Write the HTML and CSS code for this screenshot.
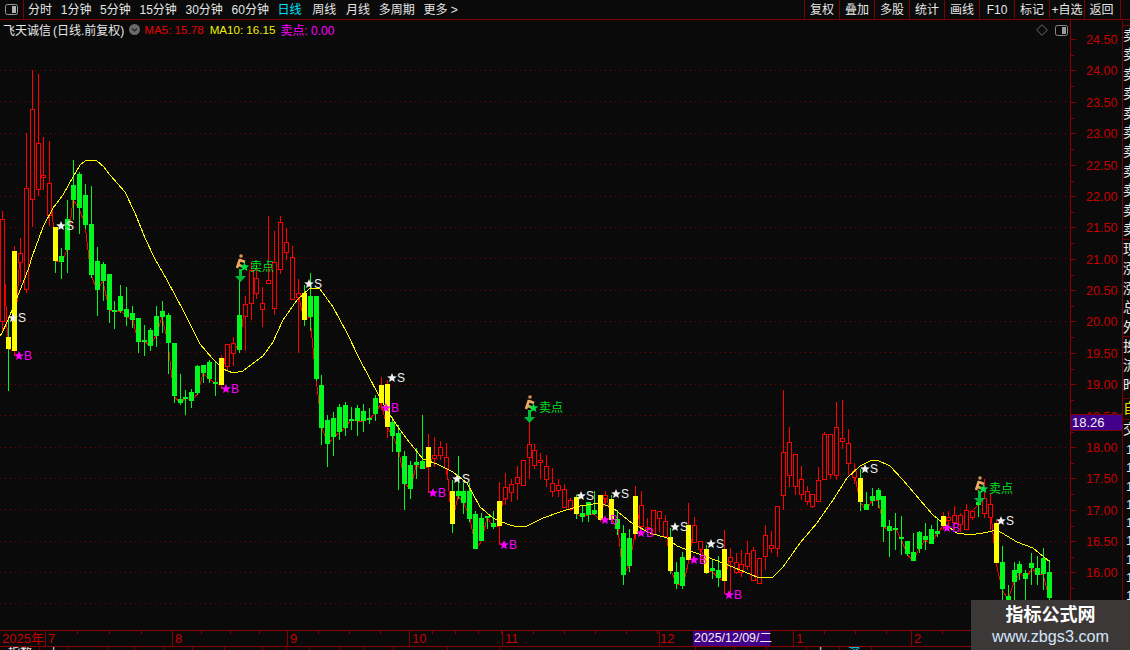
FILE: index.html
```html
<!DOCTYPE html>
<html lang="zh">
<head>
<meta charset="utf-8">
<title>飞天诚信 日线</title>
<link rel="stylesheet" href="styles.css">
</head>
<body>
<div class="app">
  <header class="topbar">
    <button class="panel-btn"><svg width="13" height="11" viewBox="0 0 13 11"><rect x="0.5" y="0.5" width="12" height="10" rx="2" fill="none" stroke="#9a9a9a"/><rect x="7" y="2" width="4" height="7" fill="#b0b0b0"/></svg></button>
    <nav class="tabs">
      <span>分时</span><span>1分钟</span><span>5分钟</span><span>15分钟</span><span>30分钟</span><span>60分钟</span>
      <span class="active">日线</span><span class="week">周线</span><span>月线</span><span>多周期</span><span>更多 &gt;</span>
    </nav>
    <nav class="tools">
      <span>复权</span><span>叠加</span><span>多股</span><span>统计</span><span>画线</span><span>F10</span><span>标记</span><span>+自选</span><span class="last">返回</span>
    </nav>
  </header>
  <div class="main">
    <section class="chart">
      <div class="info">
        <span class="name">飞天诚信</span><span class="name-sub">(日线.前复权)</span>
        <svg class="down" width="11" height="11" viewBox="0 0 11 11"><circle cx="5.5" cy="5.5" r="5.5" fill="#6a6a6a"/><path d="M3 4.5 5.5 7 8 4.5" fill="none" stroke="#222" stroke-width="1.2"/></svg>
        <span class="ma5">MA5: 15.78</span><span class="ma10">MA10: 16.15</span><span class="sell">卖点: 0.00</span>
      </div>
      <div class="corner-icons">
        <svg width="12" height="12" viewBox="0 0 12 12"><path d="M6 .7 11.3 6 6 11.3 .7 6Z" fill="none" stroke="#6a6a6a"/></svg>
        <svg width="13" height="11" viewBox="0 0 13 11"><rect x="0.5" y="0.5" width="12" height="10" rx="2" fill="none" stroke="#8a8a8a"/><rect x="7" y="2" width="4" height="7" fill="#9a9a9a"/></svg>
      </div>
      <svg id="plot" class="plot" width="1121" height="610" viewBox="0 20 1121 610" shape-rendering="crispEdges"></svg>
      <div class="price-tag">18.26</div>
    </section>
    <aside class="side">
      <div class="group g1"><span>卖</span><span>卖</span><span>卖</span><span>卖</span><span>卖</span><span>卖</span><span>卖</span><span>卖</span><span>卖</span><span>卖</span><span>卖</span></div>
      <div class="group g2"><span>现</span><span>涨</span><span>涨</span><span>总</span><span>外</span></div>
      <div class="group g3"><span>换</span><span>流</span><span>昨</span></div>
      <div class="group g4"><span class="yellow">自</span></div>
      <div class="group g5"><span>交</span></div>
      <div class="group g6"><span>1</span><span>1</span><span>1</span><span>1</span><span>1</span><span>1</span><span>1</span><span>1</span><span>1</span></div>
    </aside>
  </div>
  <div class="timeaxis">
    <span class="cell w46">2025年</span>
    <span class="cell w127 p32">7</span>
    <span class="cell w115 p29">8</span>
    <span class="cell w122 p30">9</span>
    <span class="cell w93 p23">10</span>
    <span class="cell w157 p30">11</span>
    <span class="cell w134 nob">12<b class="cursor">2025/12/09/二</b></span>
    <span class="cell w118 p30">1</span>
    <span class="cell w209 p30">2</span>
  </div>
  <div class="status">
    <span class="s40">指数</span><span class="s28">上</span><span class="s40"></span><span class="s27"></span><span class="s30"></span><span class="s28"></span><span class="s32"></span><span class="s38"></span><span class="s24"></span><span class="s23"></span><span class="s30"></span><span class="s24"></span><span class="s30"></span><span class="s54"></span><span class="s52"></span><span class="s196"></span><span class="s39"></span><span class="s32"></span><span class="s40"></span><span class="s33 mid">上</span><span class="s32 cy">深</span>
  </div>
  <aside class="watermark">
    <strong>指标公式网</strong>
    <span>www.zbgs3.com</span>
  </aside>
</div>
<script src="app.js"></script>
</body>
</html>
```

FILE: styles.css
```css
* { box-sizing: border-box; }
html, body { margin: 0; padding: 0; background: #0a0a0a; }
body { width: 1130px; height: 650px; overflow: hidden; font-family: "Liberation Sans", "Noto Sans CJK SC", sans-serif; font-size: 12px; color: #e6e6e6; }
.app { position: relative; display: flex; flex-direction: column; width: 1130px; height: 650px; overflow: hidden; }

.topbar { display: flex; align-items: stretch; height: 20px; border-bottom: 1px solid #7d0000; flex: none; }
.panel-btn { width: 24px; padding: 0; margin: 0; background: transparent; border: 0; border-right: 1px solid #7d0000; display: flex; align-items: center; justify-content: center; }
.tabs { display: flex; align-items: center; gap: 8.7px; padding: 1px 0 0 4px; flex: 1; white-space: nowrap; line-height: 18px; }
.tabs .active { color: #00e5ff; margin-right: 2px; }
.tabs .week { margin-right: 1px; }
.tools { display: flex; align-items: stretch; line-height: 20px; margin-right: 9px; }
.tools span { width: 35px; border-left: 1px solid #7d0000; text-align: center; white-space: nowrap; }
.tools .last { width: 37px; border-right: 1px solid #7d0000; padding-right: 2px; }

.main { display: flex; flex: none; height: 610px; }
.chart { position: relative; width: 1122px; flex: none; }
.plot { display: block; }
.info { position: absolute; left: 3px; top: 0; height: 18px; display: flex; align-items: center; white-space: nowrap; }
.name-sub { margin-left: 2px; }
.info .down { margin-left: 5px; margin-right: 4px; }
.ma5 { color: #e60000; font-size: 11.6px; }
.ma10 { color: #f0f000; margin-left: 6px; font-size: 11.6px; }
.sell { color: #ff00ff; margin-left: 5px; }
.corner-icons { position: absolute; right: 54px; top: 4px; display: flex; align-items: center; gap: 7px; }
.price-tag { position: absolute; left: 1071px; top: 394px; width: 51px; height: 17px; background: #42008a; border: 1px solid #7d0000; border-left: 0; border-right: 0; color: #f0f0f0; font-size: 13px; line-height: 15px; padding-left: 1px; }

.side { width: 8px; flex: none; border-left: 1px solid #7d0000; padding-top: 5px; overflow: hidden; display: flex; flex-direction: column; color: #e8e8e8; font-size: 14px; }
.group { display: flex; flex-direction: column; border-top: 1px solid #7d0000; flex: none; margin-left: -1px; width: 9px; overflow: hidden; }
.group span { display: block; width: 14px; flex: none; line-height: 19px; height: 19.4px; padding-left: 1px; overflow: visible; white-space: nowrap; }
.g1 { height: 214px; }
.g2 { height: 97px; }
.g3 { height: 62px; }
.g4 { height: 21px; }
.g5 { height: 22px; }
.g6 { border-top: 0; height: 180px; }
.g6 span { height: 18.3px; line-height: 18px; padding-left: 4px; font-size: 13px; }
.yellow { color: #e8e000; }

.timeaxis { display: flex; height: 17px; flex: none; border-top: 1px solid #8a0000; border-bottom: 1px solid #8a0000; color: #c80000; font-size: 13px; line-height: 15px; position: relative; }
.cell { position: relative; display: block; flex: none; padding-left: 2px; border-right: 1px solid #8a0000; white-space: nowrap; background-repeat: no-repeat; background-size: 100% 3px; }
.w46 { width: 46px; }
.w127 { width: 127px; }
.w115 { width: 115px; }
.w122 { width: 122px; }
.w93 { width: 93px; }
.w157 { width: 157px; }
.w134 { width: 134px; padding-left: 0; }
.w118 { width: 118px; }
.w209 { width: 209px; border-right: 0; }
.p32 { background-image: repeating-linear-gradient(90deg, transparent 0 31px, #8a0000 31px 32px); }
.p29 { background-image: repeating-linear-gradient(90deg, transparent 0 28px, #8a0000 28px 29px); }
.p30 { background-image: repeating-linear-gradient(90deg, transparent 0 30px, #8a0000 30px 31px); }
.p23 { background-image: repeating-linear-gradient(90deg, transparent 0 22px, #8a0000 22px 23px); }
.cursor { position: absolute; left: 33px; top: 0; width: 77px; height: 15px; background: #42008a; color: #f0f0f0; font-weight: normal; font-size: 12.4px; line-height: 15px; padding-left: 1px; }

.status { display: flex; height: 3px; flex: none; color: #e6e6e6; overflow: hidden; line-height: 12px; font-size: 12px; }
.status span { border-right: 1px solid #7d0000; flex: none; height: 3px; padding-left: 8px; overflow: visible; }
.s23 { width: 23px; } .s24 { width: 24px; } .s27 { width: 27px; } .s28 { width: 28px; } .s30 { width: 30px; } .s32 { width: 32px; } .s33 { width: 33px; } .s38 { width: 38px; } .s39 { width: 39px; } .s40 { width: 40px; } .s52 { width: 52px; } .s54 { width: 54px; } .s196 { width: 196px; }
.status .cy { color: #00e5ff; }

.watermark { position: absolute; left: 971px; top: 600px; width: 159px; height: 50px; background: #3c3838; display: flex; flex-direction: column; align-items: center; color: #fff; }
.watermark strong { font-size: 18px; line-height: 22px; margin-top: 4px; font-weight: bold; }
.watermark span { font-size: 16.2px; line-height: 20px; color: #d4e6fb; }
```

FILE: app.js
```js
// Daily candles, each [kind, wick top, body top, body bottom, wick bottom] in chart pixels.
// kinds: r hollow red, g green, yr yellow with red wick, yg yellow with green wick.
var candles = [
['r',211,219,321,332],['yg',317,337,349,391],['yr',246,251,351,356],['r',238,253,262,282],['r',133,188,289,293],
['r',70,109,199,227],['r',74,143,189,196],['r',137,175,176,190],['r',141,183,215,226],['yg',227,227,261,273],
['g',248,256,262,279],['g',200,219,250,273],['g',160,185,200,220],['g',172,174,208,234],['g',184,195,225,229],
['g',186,224,275,278],['g',247,261,290,316],['g',262,264,281,301],['g',274,274,310,323],['g',301,310,311,329],
['g',285,296,311,313],['g',287,309,317,326],['g',306,313,320,328],['g',318,318,342,353],['g',325,340,341,356],
['g',328,330,346,351],['g',306,316,336,347],['g',301,311,317,333],['g',313,315,343,374],['g',343,343,396,403],
['g',374,399,403,405],['g',390,397,398,415],['g',389,392,401,408],['g',365,366,393,395],['g',365,365,373,383],
['g',360,362,379,383],['g',361,382,383,396],['yr',355,358,385,389],['r',344,344,366,370],['r',337,343,353,366],
['g',280,315,350,353],['r',296,304,316,351],['r',262,270,303,320],['r',265,278,293,299],['r',287,303,309,327],
['r',216,280,283,283],['r',231,262,308,315],['r',216,222,269,274],['r',228,242,252,260],['r',246,257,299,300],
['r',279,293,297,353],['yg',285,293,320,326],['g',273,296,317,331],['g',296,296,379,381],['g',375,385,428,445],
['g',415,420,444,467],['g',412,418,437,456],['g',404,407,432,440],['g',402,405,428,436],['g',407,419,420,430],
['g',405,408,421,436],['g',404,411,421,432],['g',408,418,419,424],['g',395,398,414,421],['yr',377,385,403,410],
['yr',380,384,427,438],['g',417,422,436,452],['g',425,433,452,490],['g',451,456,484,510],['g',461,465,489,499],
['g',448,462,465,479],['g',415,461,469,469],['yr',434,447,467,493],['r',437,455,458,467],['r',441,447,455,460],
['r',443,457,468,475],['yg',480,491,524,533],['g',456,491,496,499],['g',483,491,503,514],['g',483,491,519,522],
['g',511,514,549,549],['g',513,518,541,541],['g',516,516,517,529],['g',511,523,527,529],['yr',482,501,526,545],
['r',473,487,498,505],['r',479,484,492,502],['r',466,477,483,500],['r',460,460,485,485],['r',415,444,457,479],
['r',444,450,465,469],['r',453,460,461,479],['r',455,466,479,487],['r',468,483,491,497],['r',479,485,490,497],
['r',484,489,507,507],['r',498,500,509,511],['yg',495,497,514,519],['g',506,513,517,522],['g',502,502,515,522],
['g',491,510,514,515],['yr',495,495,520,522],['r',491,495,498,505],['yg',495,499,520,522],['g',510,519,529,535],
['g',525,533,575,585],['g',529,538,566,572],['yr',486,496,534,540],['r',491,505,526,529],['r',518,527,529,533],
['r',510,510,534,534],['r',511,511,518,532],['r',515,521,536,538],['yg',528,537,571,574],['g',562,572,584,589],
['g',552,557,586,589],['yr',503,525,560,562],['r',517,525,542,543],['r',541,541,549,563],['yg',545,549,573,574],
['g',560,568,571,579],['g',556,570,578,587],['yr',530,549,581,594],['r',548,557,561,593],['r',553,562,572,574],
['r',550,564,572,577],['r',541,553,566,570],['r',547,550,580,580],['r',558,558,583,583],['r',525,535,556,570],
['r',531,545,548,553],['r',506,506,548,557],['r',390,452,495,510],['r',427,442,475,487],['r',454,454,486,495],
['r',466,479,494,500],['r',486,491,501,505],['r',494,494,506,508],['r',467,480,501,501],['r',432,434,479,479],
['r',434,434,474,479],['r',402,427,475,480],['r',400,438,441,449],['r',429,443,463,475],['r',463,471,477,484],
['yg',469,478,502,511],['g',492,504,510,510],['g',488,496,501,506],['g',488,490,500,508],['g',496,496,527,542],
['g',520,526,531,557],['g',513,528,529,550],['g',516,537,539,555],['g',541,541,554,556],['g',533,552,561,561],
['g',531,532,549,553],['g',523,536,540,550],['g',525,529,544,544],['g',519,531,534,537],['yr',512,516,526,530],
['r',511,517,520,530],['r',506,515,522,530],['r',513,515,524,532],['r',504,510,529,529],['r',510,511,517,520],
['g',490,502,505,517],['r',479,498,513,518],['r',494,504,517,530],['yr',520,523,563,566],['g',546,562,589,600],
['g',585,596,600,618],['g',562,570,582,600],['g',561,564,573,580],['g',570,573,579,600],['g',553,563,568,585],
['g',556,568,575,585],['g',548,558,574,590],['g',560,572,598,600]
];

var NS = 'http://www.w3.org/2000/svg';
var plot = document.getElementById('plot');
var BG = '#0a0a0a', RED = '#ff0000', GREEN = '#00f81c', YELLOW = '#ffff00', AXIS = '#8a0000';

function el(name, attrs, text) {
  var n = document.createElementNS(NS, name);
  for (var k in attrs) n.setAttribute(k, attrs[k]);
  if (text) n.textContent = text;
  plot.appendChild(n);
  return n;
}
function box(x, y, w, h, fill) { el('rect', { x: x, y: y, width: w, height: h, fill: fill }); }
function star(cx, cy, r, fill) {
  var p = [];
  for (var i = 0; i < 10; i++) {
    var a = -Math.PI / 2 + i * Math.PI / 5, q = i % 2 ? r * 0.45 : r;
    p.push((cx + q * Math.cos(a)).toFixed(1) + ',' + (cy + q * Math.sin(a)).toFixed(1));
  }
  el('polygon', { points: p.join(' '), fill: fill, 'shape-rendering': 'auto' });
}
function label(x, y, s, fill, size) {
  el('text', { x: x, y: y, fill: fill, 'font-size': size, 'shape-rendering': 'auto' }, s);
}

// grid and price axis
for (var k = 0; k < 18; k++) {
  var gy = Math.round(70 + 31.38 * k);
  el('line', { x1: 0, x2: 1070, y1: gy + 0.5, y2: gy + 0.5, stroke: '#7a0000', 'stroke-dasharray': '1 4' });
}
box(1070, 20, 1, 610, AXIS);
var prices = ['24.50','24.00','23.50','23.00','22.50','22.00','21.50','21.00','20.50','20.00','19.50','19.00','18.50','18.00','17.50','17.00','16.50','16.00','15.50'];
prices.forEach(function (p, i) {
  var y = Math.round(39 + 31.38 * i);
  box(1071, y, 5, 1, AXIS);
  box(1071, Math.round(y + 15.7), 3, 1, AXIS);
  label(1086, y + 5, p, '#c80000', 12.6);
});

// close line behind the candles; it only shows beside solid bars
function cx(i) { return 8.3 + 5.915 * i; }
candles.forEach(function (c, n) {
  if (n === 0) return;
  var prev = candles[n - 1];
  if (prev[0] === 'r' && c[0] === 'r') return;
  var y1 = prev[0] === 'r' ? prev[2] : prev[3];
  var y2 = c[0] === 'r' ? c[2] : c[3];
  el('line', { x1: Math.round(cx(n - 2)), y1: y1, x2: Math.round(cx(n - 1)), y2: y2, stroke: RED, 'stroke-width': 1 });
});

// candles
candles.forEach(function (c, n) {
  var left = Math.round(cx(n - 1) - 2.3), mid = left + 2;
  var kind = c[0], wt = c[1], bt = c[2], bb = c[3], wb = c[4];
  var wick = (kind === 'r' || kind === 'yr') ? RED : GREEN;
  box(mid, wt, 1, wb - wt, wick);
  if (kind === 'r') {
    el('rect', { x: left + 0.5, y: bt + 0.5, width: 4, height: Math.max(bb - bt, 2), fill: BG, stroke: RED });
  } else {
    box(left, bt, 5, Math.max(bb - bt, 2), kind === 'g' ? GREEN : YELLOW);
  }
});

// MA line
var ma = [[0,336],[2,333],[8,320],[16,300],[23,283],[29,267],[32,257],[43,227],[53,208],[63,195],[73,177],[80,165],[85,161],[90,160],[97,161],[104,167],[110,175],[125,192],[135,213],[145,238],[155,259],[167,280],[183,310],[200,344],[212,358],[223,369],[233,373],[243,371],[255,362],[263,356],[273,342],[283,320],[297,300],[310,288],[320,289],[333,307],[347,333],[360,360],[377,392],[388,412],[400,430],[410,443],[423,459],[437,464],[453,472],[467,483],[480,507],[493,518],[507,524],[517,527],[527,526],[543,518],[563,511],[580,506],[600,503],[613,508],[633,524],[650,533],[667,538],[677,546],[693,552],[707,557],[723,563],[740,570],[757,577],[773,577],[783,567],[800,543],[817,523],[833,500],[847,478],[860,466],[870,461],[877,460],[890,466],[903,480],[920,500],[933,515],[943,523],[957,533],[970,535],[983,533],[997,530],[1017,542],[1033,548],[1050,562]];
el('polyline', { points: ma.map(function (p) { return p.join(','); }).join(' '), fill: 'none', stroke: YELLOW, 'stroke-width': 1 });

// signals
[[13,318],[61,226],[309,284],[392,378],[457,479],[581,496],[616,494],[675,527],[711,544],[865,469],[1001,521]].forEach(function (s) {
  star(s[0], s[1], 5, '#f0f0f0');
  label(s[0] + 5, s[1] + 4, 'S', '#f0f0f0', 12);
});
[[19,356],[226,389],[386,408],[433,493],[504,545],[605,520],[641,533],[694,560],[729,595],[947,528]].forEach(function (s) {
  star(s[0], s[1], 5, '#ff00ff');
  label(s[0] + 5, s[1] + 4, 'B', '#ff00ff', 12);
});
[[241,256],[530,397],[980,478]].forEach(function (s) {
  var x = s[0], y = s[1];
  var ax = x - 1, ay = y + 13;
  box(ax - 1, ay, 3, 7, '#00c030');
  el('polygon', { points: (ax - 5) + ',' + (ay + 7) + ' ' + (ax + 6) + ',' + (ay + 7) + ' ' + (ax + 0.5) + ',' + (ay + 13), fill: '#00b838', 'shape-rendering': 'auto' });
  el('circle', { cx: x, cy: y, r: 1.8, fill: '#e09050', 'shape-rendering': 'auto' });
  el('path', { d: 'M' + (x - 1) + ' ' + (y + 3) + 'L' + (x - 4) + ' ' + (y + 12) + 'M' + (x - 1) + ' ' + (y + 4) + 'L' + (x + 4) + ' ' + (y + 6) + 'M' + (x - 2) + ' ' + (y + 9) + 'L' + (x + 3) + ' ' + (y + 11), stroke: '#f0a860', 'stroke-width': 2.6, fill: 'none', 'shape-rendering': 'auto' });
  star(x + 3.5, y + 11, 5, '#00e040');
  label(x + 9, y + 15, '卖点', '#00e020', 12);
});
```
